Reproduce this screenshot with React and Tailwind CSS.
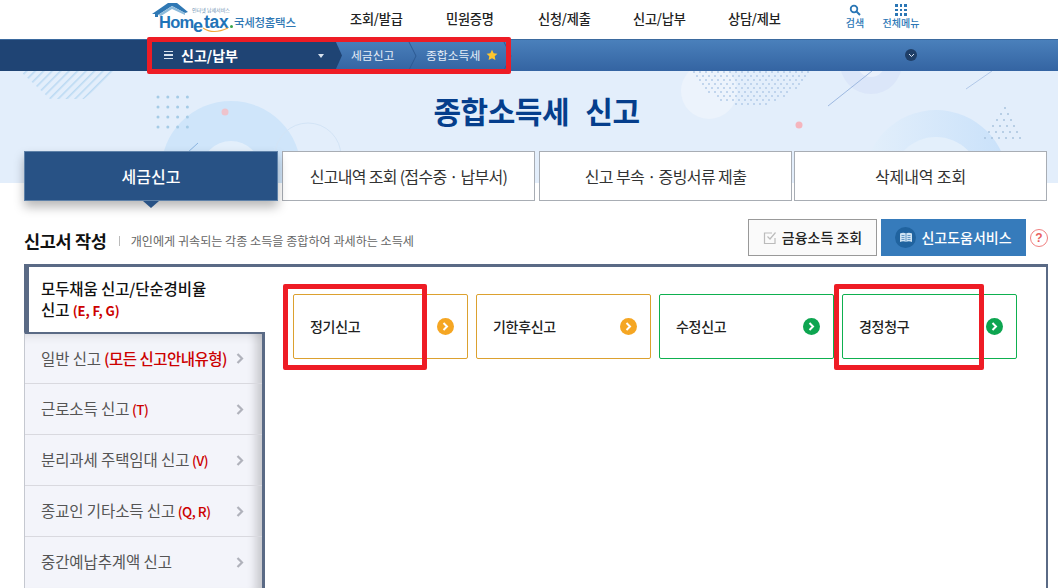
import React from "react";

const KR = { fontFamily: '"Noto Sans CJK KR", "Noto Sans", sans-serif' };
const LS = { fontFamily: '"Liberation Sans", sans-serif' };

function Logo() {
  return (
    <div className="relative w-[150px] h-[39px] shrink-0">
      <svg className="absolute left-0 top-0" width="42" height="18" viewBox="0 0 42 18">
        <path d="M2 14 L18 3 L27 3 L38 12 L35 13 L22 6 L8 15 L8 17 L5 17 L5 14 Z" fill="#2f78b4" />
        <path d="M8 15 L22 6 L35 13 L35 15 L22 9 L11 16 Z" fill="#8dbbdb" />
      </svg>
      <span className="absolute left-[9px] top-[10px] text-[16.5px] font-bold leading-[24px] text-[#1f74b8] tracking-[-0.7px]" style={LS}>Hom</span>
      <span className="absolute left-[43px] top-[14px] text-[18px] font-bold leading-[24px] text-[#1f74b8]" style={LS}>e</span>
      <span className="absolute left-[54px] top-[10px] text-[17.5px] font-bold leading-[24px] text-[#1f74b8] tracking-[-0.3px]" style={LS}>tax</span>
      <span className="absolute left-[80px] top-[25px] w-[3px] h-[3px] rounded-full bg-[#3aa648]" />
      <span className="absolute left-[42px] top-[7px] text-[5px] leading-[6px] text-[#6a8fb0] whitespace-nowrap" style={KR}>인터넷 납세서비스</span>
      <svg className="absolute left-[52px] top-[27px]" width="28" height="7" viewBox="0 0 28 7">
        <path d="M1 1 Q11 8 26 1" fill="none" stroke="#f2a93b" strokeWidth="1.100" />
      </svg>
      <span className="absolute left-[84px] top-[14px] text-[11.5px] leading-[16px] font-medium text-[#2f78b4] whitespace-nowrap tracking-[-0.3px]" style={KR}>국세청홈택스</span>
    </div>
  );
}

function TopBar() {
  const menus = [
    ["조회/발급", "w-[96px]"],
    ["민원증명", "w-[92px]"],
    ["신청/제출", "w-[95px]"],
    ["신고/납부", "w-[95px]"],
    ["상담/제보", "w-[52px]"],
  ];
  return (
    <div className="h-[39px] bg-white flex items-start pl-[150px]">
      <Logo />
      <div className="flex ml-[50px] pt-[10px]">
        {menus.map(([m, w]) => (
          <span key={m} className={`${w} text-[13.2px] leading-[18px] font-medium text-[#222] whitespace-nowrap tracking-[-0.2px]`}>{m}</span>
        ))}
      </div>
      <div className="flex flex-col items-center ml-[65px] pt-[4px] w-[20px]">
        <svg width="12" height="12" viewBox="0 0 12 12" fill="none">
          <circle cx="5" cy="5" r="3.300" stroke="#2a76b5" strokeWidth="1.800" />
          <path d="M7.500 7.500 L11 11" stroke="#2a76b5" strokeWidth="2" />
        </svg>
        <span className="text-[10px] leading-[12px] mt-[1px] font-medium text-[#2a76b5] whitespace-nowrap">검색</span>
      </div>
      <div className="flex flex-col items-center ml-[17px] pt-[4px] w-[38px]">
        <div className="grid grid-cols-3 gap-[2px] w-[12px]">
          {Array.from({ length: 9 }).map((_, i) => (
            <span key={i} className="w-[2.500px] h-[2.500px] bg-[#2a76b5]" />
          ))}
        </div>
        <span className="text-[10px] leading-[12px] mt-[1px] font-medium text-[#2a76b5] whitespace-nowrap">전체메뉴</span>
      </div>
    </div>
  );
}

function Crumb({ className }) {
  return (
    <svg className={className} width="9" height="32" viewBox="0 0 9 32">
      <path d="M0 0 L8 16 L0 32" fill="none" stroke="#2d5a92" strokeWidth="1" />
    </svg>
  );
}

function NavBar() {
  return (
    <div className="relative h-[32px] flex bg-gradient-to-b from-[#4a80bb] to-[#3464a2] border-t border-[#3b6a9f]">
      <div className="relative w-[335px] bg-[#1f4474] flex items-center pl-[164px] pr-[10px] shrink-0">
        <span className="flex flex-col gap-[2px] w-[9px] mr-[8px] -mt-[1px]">
          <span className="h-[1.500px] bg-[#d8e2ee]" />
          <span className="h-[1.500px] bg-[#d8e2ee]" />
          <span className="h-[1.500px] bg-[#d8e2ee]" />
        </span>
        <span className="text-[14px] leading-[18px] font-bold text-white whitespace-nowrap -mt-[2px]">신고/납부</span>
        <span className="ml-auto mr-[1px] w-0 h-0 border-x-[3.500px] border-x-transparent border-t-[4px] border-t-[#d8e2ee]" />
        <svg className="absolute left-[335px] top-0 z-10" width="7" height="31" viewBox="0 0 7 31">
          <path d="M0 0 L7 15.500 L0 31 Z" fill="#1f4474" />
        </svg>
      </div>
      <div className="relative flex items-center h-full pl-[16px]">
        <span className="text-[11.800px] leading-[16px] text-[#e6eef8] w-[75px] whitespace-nowrap -mt-[2px]" style={KR}>세금신고</span>
        <Crumb className="absolute left-[73px] top-0" />
        <span className="text-[11.800px] leading-[16px] text-[#e6eef8] whitespace-nowrap -mt-[2px]" style={KR}>종합소득세</span>
        <svg className="ml-[6px] -mt-[2px]" width="12" height="12" viewBox="0 0 24 24"><path d="M12 1.500l3.300 6.900 7.600 1-5.500 5.200 1.400 7.500L12 18.500l-6.800 3.600 1.400-7.500L1.100 9.400l7.600-1z" fill="#fdc62e" /></svg>
        <Crumb className="absolute left-[168px] top-0" />
      </div>
      <span className="absolute left-[905px] top-[9px] w-[12px] h-[12px] rounded-full bg-[#1f3f68] flex items-center justify-center">
        <svg width="7" height="5" viewBox="0 0 7 5"><path d="M1 1 L3.500 3.500 L6 1" fill="none" stroke="#dbe6f2" strokeWidth="1" /></svg>
      </span>
    </div>
  );
}

function HeroArt() {
  const grid = [];
  for (let r = 0; r < 4; r++) for (let c = 0; c < 4; c++) grid.push([158 + c * 9.800, 26 + r * 10]);
  const halftone = [];
  for (let r = 0; r < 10; r++) {
    for (let c = 0; c < 24; c++) {
      const x = 682 + c * 6 + (r % 2 ? 3 : 0);
      const y = 1 + r * 4;
      if (Math.hypot(x - 750, y + 32) < 68) halftone.push([x, y]);
    }
  }
  const tri = [];
  for (let r = 0; r < 6; r++) for (let c = 0; c <= r; c++) tri.push([1005 - r * 4 + c * 7, 37 + r * 6]);
  return (
    <svg className="absolute left-0 top-0" width="1058" height="112" viewBox="0 0 1058 112">
      <defs>
        <pattern id="hatch" width="6" height="6" patternUnits="userSpaceOnUse" patternTransform="rotate(45)">
          <rect width="1.600" height="6" fill="#bcdaf3" />
        </pattern>
        <linearGradient id="fade" x1="0" x2="1" y1="0" y2="0">
          <stop offset="0" stopColor="#e3effb" />
          <stop offset="1" stopColor="#c9e1fa" />
        </linearGradient>
      </defs>
      <path d="M20 0 L118 0 L84 28 L50 28 Z" fill="url(#hatch)" />
      <circle cx="231" cy="100" r="70" fill="#cfe5fa" />
      <circle cx="231" cy="100" r="30" fill="#e3effb" />
      <circle cx="308" cy="85" r="33" fill="none" stroke="#d3e4f6" strokeWidth="1" />
      <path d="M176 92 L198 72" stroke="#8ab4e0" strokeWidth="1" />
      {grid.map(([x, y], i) => <circle key={i} cx={x} cy={y} r="1.500" fill="#a5cbe6" />)}
      <circle cx="225" cy="41" r="3.500" fill="#eec3cc" />
      <circle cx="709" cy="20" r="28" fill="#ecf3fc" />
      {halftone.map(([x, y], i) => <circle key={i} cx={x} cy={y} r="1" fill="#b3cbe8" />)}
      <circle cx="871" cy="-8" r="31" fill="#dbe6f9" />
      <circle cx="871" cy="-8" r="14" fill="#e9f0fb" />
      <path d="M828 35 L872 0" stroke="#9db8e0" strokeWidth="1" />
      <path d="M966 18 L992 0" stroke="#b1c8e8" strokeWidth="1" />
      <circle cx="799" cy="54" r="3.500" fill="#f5b5bd" />
      <circle cx="936" cy="111" r="72" fill="url(#fade)" />
      <circle cx="936" cy="111" r="45" fill="#e3effb" />
      {tri.map(([x, y], i) => <circle key={i} cx={x} cy={y} r="1" fill="#a9c3de" />)}
    </svg>
  );
}

function Tabs() {
  const others = [
    ["신고내역 조회 (접수중 · 납부서)", "w-[253px]", "tracking-[-0.7px]"],
    ["신고 부속 · 증빙서류 제출", "w-[253px]", "tracking-[-0.6px]"],
    ["삭제내역 조회", "w-[253px]", "tracking-[-0.1px]"],
  ];
  return (
    <div className="absolute left-[24px] top-[80px] flex gap-[4px] h-[50px]">
      <div className="relative w-[254px] h-full bg-[#285285] border border-[#5e81a8] shadow-[0_6px_10px_rgba(0,0,0,0.28)] flex items-center justify-center text-[16px] font-medium text-white">
        세금신고
        <span className="absolute left-[118px] top-[49px] w-0 h-0 border-x-[8px] border-x-transparent border-t-[7px] border-t-[#285285]" />
      </div>
      {others.map(([t, w, tr], i) => (
        <div key={t} className={`${w} ${tr} ${i === 2 ? "-ml-[2px]" : ""} h-full bg-white border border-[#a8adb4] flex items-center justify-center text-[16px] text-[#333] whitespace-nowrap`}>{t}</div>
      ))}
    </div>
  );
}

function TitleRow() {
  return (
    <div className="h-[81px] bg-white flex items-start pl-[24px] pt-[36px]">
      <span className="text-[17.500px] leading-[44px] font-bold text-[#111] whitespace-nowrap tracking-[-0.3px] h-[44px]">신고서 작성</span>
      <span className="w-px h-[10px] bg-[#bbb] ml-[12px] mt-[17px]" />
      <span className="ml-[11px] text-[12.100px] leading-[44px] text-[#666] whitespace-nowrap">개인에게 귀속되는 각종 소득을 종합하여 과세하는 소득세</span>
      <div className="ml-auto flex items-start pr-[10px]">
        <button className="w-[129px] h-[37px] bg-[#fafafa] border border-[#999] flex items-center justify-center gap-[5px] text-[14px] font-medium text-[#222] whitespace-nowrap">
          <svg width="14" height="14" viewBox="0 0 14 14" fill="none"><path d="M12 7v5.500H1.500V2H9" stroke="#bbb" strokeWidth="1.200" /><path d="M4.500 5.500 L7 8 L12.500 1.500" stroke="#bbb" strokeWidth="1.200" /></svg>
          금융소득 조회
        </button>
        <button className="ml-[4px] w-[145px] h-[37px] bg-[#367bbb] flex items-center justify-center gap-[5px] text-[14px] font-medium text-white whitespace-nowrap">
          <span className="w-[21px] h-[21px] rounded-full bg-[#20639f] flex items-center justify-center">
            <svg width="14" height="11" viewBox="0 0 14 11"><path d="M1 1.500 C3 0.500 5.500 0.500 7 1.500 C8.500 0.500 11 0.500 13 1.500 V10 C11 9 8.500 9 7 10 C5.500 9 3 9 1 10 Z" fill="#cfe3f3" /><path d="M7 1.500V10M2.500 3.500H5.500M2.500 5.500H5.500M2.500 7.500H5.500M8.500 3.500H11.500M8.500 5.500H11.500M8.500 7.500H11.500" stroke="#4a86ba" strokeWidth="0.800" /></svg>
          </span>
          신고도움서비스
        </button>
        <span className="ml-[4px] mt-[10px] w-[18px] h-[18px] rounded-full border-[1.500px] border-[#f08080] text-[#e86060] text-[12px] leading-[14px] font-bold flex items-center justify-center" style={LS}>?</span>
      </div>
    </div>
  );
}

function SideItem({ label, code, codeKr, top }) {
  return (
    <div className={`${top ? "h-[49px]" : "h-[51px] border-t border-[#d9d9df]"} flex items-center pl-[16px] pr-[18px] text-[15.500px] text-[#555] whitespace-nowrap tracking-[-0.1px]`}>
      <span>
        {label}
        {code && <span className={`text-[#cc0000] font-medium tracking-[-0.5px] ${codeKr ? "text-[15.500px]" : "text-[13.500px]"}`}> {code}</span>}
      </span>
      <svg className="ml-auto shrink-0" width="8" height="11" viewBox="0 0 8 11"><path d="M1.500 1 L6 5.500 L1.500 10" fill="none" stroke="#b0b2bb" strokeWidth="2.200" /></svg>
    </div>
  );
}

function Card({ label, color, arrow }) {
  return (
    <div className="relative w-[175px] shrink-0 h-[65px] border rounded-[2px] bg-white flex items-center pl-[16px] text-[14px] font-medium text-[#222] whitespace-nowrap" style={{ borderColor: color }}>
      <span className="tracking-[-0.3px]">{label}</span>
      <span className="absolute right-[13px] top-[23px] w-[17px] h-[17px] rounded-full flex items-center justify-center" style={{ background: arrow }}>
        <svg width="7" height="9" viewBox="0 0 7 9"><path d="M1.500 1 L5 4.500 L1.500 8" fill="none" stroke="#fff" strokeWidth="2" /></svg>
      </span>
    </div>
  );
}

function Panel() {
  return (
    <div className="relative ml-[24px] w-[1024px] h-[324px] border-t-[3px] border-r-[2px] border-[#5a6a85] flex overflow-hidden">
      <div className="w-[241px] shrink-0 flex flex-col">
        <div className="h-[65px] bg-white border-l-[5px] border-[#5a6a85] pl-[12px] pt-[11px] text-[15.500px] leading-[21px] font-medium text-[#111] tracking-[-0.1px]">
          <div className="whitespace-nowrap">모두채움 신고/단순경비율</div>
          <div className="whitespace-nowrap">신고 <span className="text-[#cc0000] font-bold text-[13px]">(E, F, G)</span></div>
        </div>
        <div className="flex-1 bg-[#f3f4fa] border-l border-l-[#c5c8d0] border-t-[2px] border-t-[#5a6a85] border-r-[3px] border-r-[#5a6a85] shadow-[inset_-14px_0_10px_-8px_rgba(0,0,0,0.18),inset_0_10px_10px_-8px_rgba(0,0,0,0.1)]">
          <SideItem label="일반 신고" code="(모든 신고안내유형)" codeKr top />
          <SideItem label="근로소득 신고" code="(T)" />
          <SideItem label="분리과세 주택임대 신고" code="(V)" />
          <SideItem label="종교인 기타소득 신고" code="(Q, R)" />
          <SideItem label="중간예납추계액 신고" />
        </div>
      </div>
      <div className="flex-1 pl-[28px] pt-[27px] flex gap-[8px] bg-white">
        <Card label="정기신고" color="#dca12f" arrow="#f5a623" />
        <Card label="기한후신고" color="#dca12f" arrow="#f5a623" />
        <Card label="수정신고" color="#0eb04f" arrow="#0da550" />
        <Card label="경정청구" color="#0eb04f" arrow="#0da550" />
      </div>
    </div>
  );
}

function Highlight({ className }) {
  return <div className={`absolute border-[5px] border-[#ee1c25] rounded-[2px] pointer-events-none z-20 ${className}`} />;
}

export default function App() {
  return (
    <div className="relative w-[1058px] h-[588px] overflow-hidden bg-white" style={KR}>
      <TopBar />
      <NavBar />
      <div className="relative h-[112px] bg-[#e3eefb]">
        <HeroArt />
        <h1 className="relative pt-[17px] pl-[15px] text-center text-[30px] leading-[44px] font-bold text-[#053e8c] tracking-[-0.5px] [word-spacing:10px]">종합소득세 신고</h1>
        <Tabs />
      </div>
      <TitleRow />
      <Panel />
      <Highlight className="left-[147px] top-[37px] w-[364px] h-[37px]" />
      <Highlight className="left-[283px] top-[284px] w-[144px] h-[86px]" />
      <Highlight className="left-[834px] top-[284px] w-[150px] h-[86px]" />
    </div>
  );
}
